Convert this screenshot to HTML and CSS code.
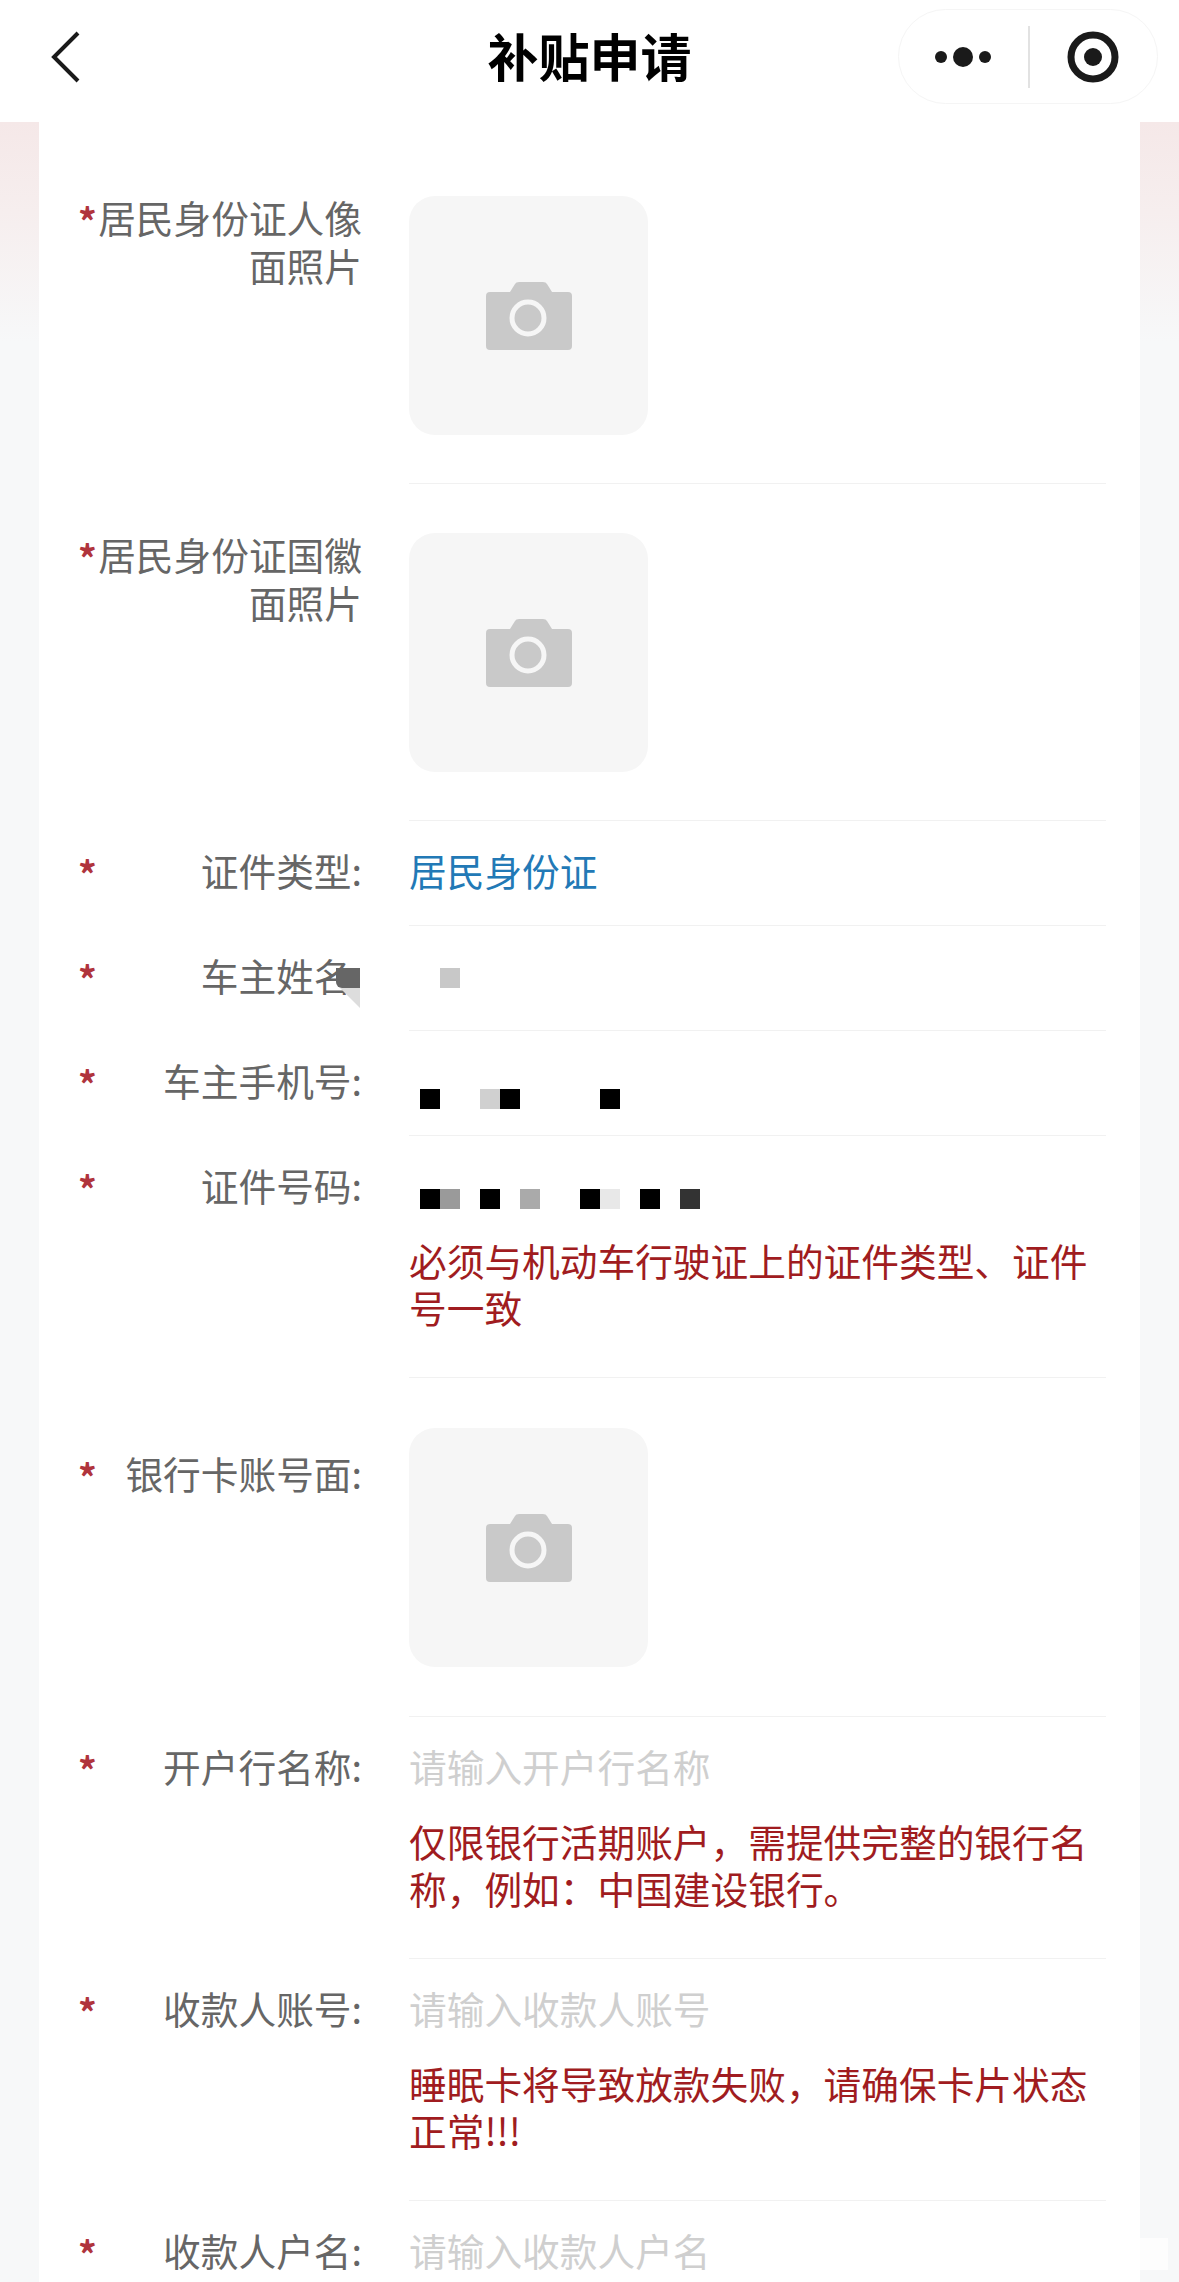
FILE: index.html
```html
<!DOCTYPE HTML>
<html>
	<head>
		<meta charset="utf-8"/>
		<title>补贴申请</title>
		<link rel="stylesheet" href="styles.css">
	</head>
	<body>
		<header class="nav">
			<svg class="nav-back" width="30" height="54" viewBox="0 0 30 54">
				<path d="M28 3 L4 27 L28 51" fill="none" stroke="#1a1a1a" stroke-width="4"/>
			</svg>
			<h1 class="nav-title">补贴申请</h1>
			<div class="capsule">
				<svg class="capsule-more" width="60" height="24" viewBox="0 0 60 24">
					<circle cx="6" cy="12" r="6" fill="#1a1a1a"/>
					<circle cx="28" cy="12" r="10" fill="#1a1a1a"/>
					<circle cx="50" cy="12" r="6" fill="#1a1a1a"/>
				</svg>
				<span class="capsule-line"></span>
				<svg class="capsule-close" width="52" height="52" viewBox="0 0 52 52">
					<circle cx="26" cy="26" r="22" fill="none" stroke="#1a1a1a" stroke-width="7"/>
					<circle cx="26" cy="26" r="9" fill="#1a1a1a"/>
				</svg>
			</div>
		</header>

		<main class="page">
			<form class="card">
				<div class="row">
					<div class="label label-upload"><span class="star">*</span>居民身份证人像面照片</div>
					<div class="field field-upload">
						<div class="upload">
							<svg width="86" height="68" viewBox="0 0 86 68">
								<path d="M4 10 H24 L29 2 Q30 0 33 0 H57 Q60 0 61 2 L66 10 H82 Q86 10 86 14 V64 Q86 68 82 68 H4 Q0 68 0 64 V14 Q0 10 4 10 Z" fill="#c9c9c9"/>
								<circle cx="42" cy="36" r="16" fill="#c9c9c9" stroke="#f6f6f6" stroke-width="5"/>
							</svg>
						</div>
					</div>
				</div>
				<div class="row">
					<div class="label label-upload"><span class="star">*</span>居民身份证国徽面照片</div>
					<div class="field field-upload">
						<div class="upload">
							<svg width="86" height="68" viewBox="0 0 86 68">
								<path d="M4 10 H24 L29 2 Q30 0 33 0 H57 Q60 0 61 2 L66 10 H82 Q86 10 86 14 V64 Q86 68 82 68 H4 Q0 68 0 64 V14 Q0 10 4 10 Z" fill="#c9c9c9"/>
								<circle cx="42" cy="36" r="16" fill="#c9c9c9" stroke="#f6f6f6" stroke-width="5"/>
							</svg>
						</div>
					</div>
				</div>
				<div class="row">
					<div class="label"><span class="star">*</span>证件类型:</div>
					<div class="field"><div class="value value-link">居民身份证</div></div>
				</div>
				<div class="row">
					<div class="label"><span class="star">*</span>车主姓名:<i class="smudge"></i><i class="smudge-tail"></i></div>
					<div class="field">
						<div class="mosaic mosaic-name">
							<i class="cell"></i><i class="cell shade-c"></i>
						</div>
					</div>
				</div>
				<div class="row">
					<div class="label"><span class="star">*</span>车主手机号:</div>
					<div class="field">
						<div class="mosaic mosaic-phone">
							<i class="cell shade-0"></i><i class="cell"></i><i class="cell"></i><i class="cell shade-d"></i><i class="cell shade-0"></i>
							<i class="cell"></i><i class="cell"></i><i class="cell"></i><i class="cell"></i><i class="cell shade-0"></i>
						</div>
					</div>
				</div>
				<div class="row">
					<div class="label"><span class="star">*</span>证件号码:</div>
					<div class="field">
						<div class="mosaic mosaic-id">
							<i class="cell shade-0"></i><i class="cell shade-9"></i><i class="cell"></i><i class="cell shade-0"></i>
							<i class="cell"></i><i class="cell shade-a"></i><i class="cell"></i><i class="cell"></i>
							<i class="cell shade-0"></i><i class="cell shade-e"></i><i class="cell"></i><i class="cell shade-0"></i>
							<i class="cell"></i><i class="cell shade-3"></i>
						</div>
						<p class="hint">必须与机动车行驶证上的证件类型、证件号一致</p>
					</div>
				</div>
				<div class="row">
					<div class="label label-low"><span class="star">*</span>银行卡账号面:</div>
					<div class="field field-upload field-upload-low">
						<div class="upload">
							<svg width="86" height="68" viewBox="0 0 86 68">
								<path d="M4 10 H24 L29 2 Q30 0 33 0 H57 Q60 0 61 2 L66 10 H82 Q86 10 86 14 V64 Q86 68 82 68 H4 Q0 68 0 64 V14 Q0 10 4 10 Z" fill="#c9c9c9"/>
								<circle cx="42" cy="36" r="16" fill="#c9c9c9" stroke="#f6f6f6" stroke-width="5"/>
							</svg>
						</div>
					</div>
				</div>
				<div class="row">
					<div class="label"><span class="star">*</span>开户行名称:</div>
					<div class="field">
						<div class="value value-empty">请输入开户行名称</div>
						<p class="hint">仅限银行活期账户，需提供完整的银行名称，例如：中国建设银行。</p>
					</div>
				</div>
				<div class="row">
					<div class="label"><span class="star">*</span>收款人账号:</div>
					<div class="field">
						<div class="value value-empty">请输入收款人账号</div>
						<p class="hint">睡眠卡将导致放款失败，请确保卡片状态正常!!!</p>
					</div>
				</div>
				<div class="row">
					<div class="label"><span class="star">*</span>收款人户名:</div>
					<div class="field">
						<div class="value value-empty">请输入收款人户名</div>
					</div>
				</div>
			</form>
		</main>
		<div class="watermark"></div>
	</body>
</html>
```

FILE: styles.css
```css
html, body {
	height: 2282px;
	overflow: hidden;
}
body {
	position: relative;
	margin: 0;
	background: #fff;
	font-family: "Noto Sans CJK SC", "Noto Sans", sans-serif;
}
.nav {
	position: relative;
	display: flex;
	align-items: center;
	justify-content: center;
	height: 122px;
	background: #fff;
}
.nav-back {
	position: absolute;
	left: 50px;
	top: 30px;
}
.nav-title {
	margin: 0 0 12px;
	font-size: 51px;
	line-height: 60px;
	font-weight: 700;
	color: #000;
}
.capsule {
	position: absolute;
	left: 898px;
	top: 9px;
	box-sizing: border-box;
	width: 260px;
	height: 95px;
	display: flex;
	align-items: center;
	border: 1px solid #f5f5f5;
	border-radius: 48px;
}
.capsule-more {
	margin-left: 36px;
}
.capsule-line {
	width: 2px;
	height: 62px;
	margin-left: 33px;
	background: #e2e2e2;
}
.capsule-close {
	margin-left: 37px;
}
.page {
	height: 2160px;
	padding: 0 39px;
	background: linear-gradient(#f5e8e8 0, #f6eeee 90px, #f7f8f9 220px);
}
.card {
	height: 2160px;
	box-sizing: border-box;
	padding: 25px 34px 0 39px;
	background: #fff;
}
.row {
	display: flex;
}
.label {
	position: relative;
	box-sizing: border-box;
	width: 284px;
	margin-right: 47px;
	padding-top: 25px;
	font-size: 37.7px;
	line-height: 48px;
	color: #666;
	text-align: right;
}
.label-upload {
	padding-top: 46px;
}
.label-low {
	padding-top: 71px;
}
.star {
	float: left;
	width: 17px;
	margin-top: 3px;
	font-size: 37px;
	font-weight: 700;
	color: #b0343c;
	text-align: left;
}
.smudge {
	position: absolute;
	right: 2px;
	top: 42px;
	width: 24px;
	height: 20px;
	border-radius: 0 0 0 6px;
	background: #666;
}
.smudge-tail {
	position: absolute;
	right: 2px;
	top: 62px;
	width: 20px;
	height: 20px;
	background: #ddd;
	clip-path: polygon(0 0, 100% 0, 100% 100%);
}
.field {
	flex: 1;
	min-width: 0;
	padding: 25px 0 31px;
	border-bottom: 1px solid #f1f1f1;
	font-size: 37.7px;
	line-height: 48px;
}
.field-upload {
	padding: 49px 0 48px;
}
.field-upload-low {
	padding: 50px 0 49px;
}
.upload {
	display: flex;
	align-items: center;
	justify-content: center;
	width: 239px;
	height: 239px;
	border-radius: 26px;
	background: #f6f6f6;
}
.value-link {
	color: #2279b6;
}
.value-empty {
	color: #cfcfcf;
}
.mosaic {
	display: flex;
	box-sizing: border-box;
	height: 48px;
	padding-left: 11px;
}
.mosaic-name {
	padding-top: 17px;
}
.mosaic-phone {
	padding-top: 33px;
}
.mosaic-id {
	padding-top: 28px;
}
.cell {
	width: 20px;
	height: 20px;
}
.shade-0 { background: #000; }
.shade-3 { background: #333; }
.shade-9 { background: #9a9a9a; }
.shade-a { background: #aaa; }
.shade-c { background: #c8c8c8; }
.shade-d { background: #d0d0d0; }
.shade-e { background: #e8e8e8; }
.hint {
	margin: 27px 0 16px;
	width: 680px;
	font-size: 37.7px;
	line-height: 47px;
	color: #a01c20;
}
.watermark {
	position: absolute;
	left: 1134px;
	top: 2238px;
	width: 34px;
	height: 32px;
	background: rgba(255, 255, 255, 0.7);
}
```
